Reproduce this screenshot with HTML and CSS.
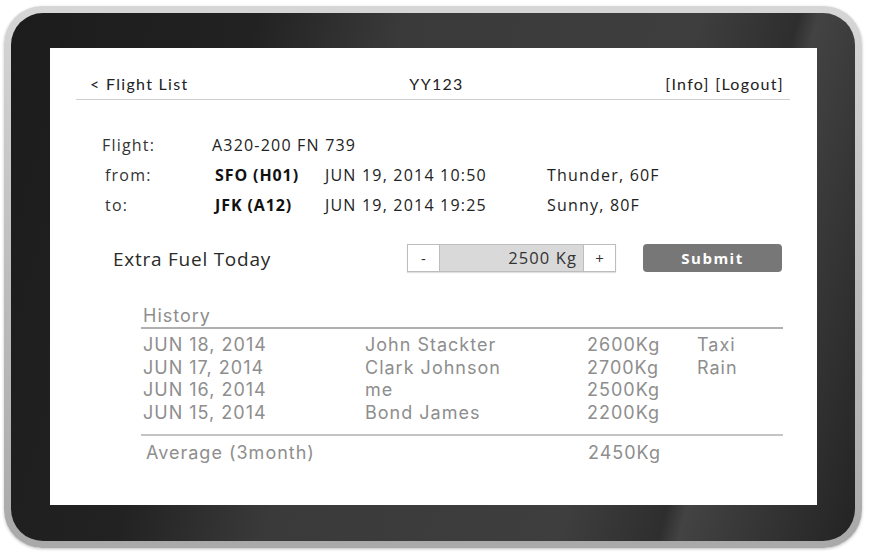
FILE: index.html
```html
<!DOCTYPE html>
<html>
<head>
<meta charset="utf-8">
<link rel="stylesheet" href="styles.css">
</head>
<body>
<div class="tablet">
  <div class="bezel">
    <div class="screen">
      <div class="topbar">
        <span class="back">&lt; Flight List</span>
        <span class="title">YY123</span>
        <span class="links">[Info] [Logout]</span>
      </div>

      <div class="info">
        <span class="label">Flight:</span>
        <span class="span3">A320-200 FN 739</span>
        <span class="label ind">from:</span>
        <span class="code ind">SFO (H01)</span>
        <span class="ind">JUN 19, 2014 10:50</span>
        <span class="ind">Thunder, 60F</span>
        <span class="label ind">to:</span>
        <span class="code ind">JFK (A12)</span>
        <span class="ind">JUN 19, 2014 19:25</span>
        <span class="ind">Sunny, 80F</span>
      </div>

      <div class="fuel">
        <span class="fuel-label">Extra Fuel Today</span>
        <div class="stepper">
          <span class="step-btn">-</span>
          <span class="step-value">2500 Kg</span>
          <span class="step-btn">+</span>
        </div>
        <span class="submit">Submit</span>
      </div>

      <div class="history">
        <div class="history-title">History</div>
        <div class="history-rows">
          <span>JUN 18, 2014</span><span>John Stackter</span><span>2600Kg</span><span>Taxi</span>
          <span>JUN 17, 2014</span><span>Clark Johnson</span><span>2700Kg</span><span>Rain</span>
          <span>JUN 16, 2014</span><span>me</span><span>2500Kg</span><span></span>
          <span>JUN 15, 2014</span><span>Bond James</span><span>2200Kg</span><span></span>
        </div>
        <div class="average">
          <span>Average (3month)</span><span>2450Kg</span>
        </div>
      </div>
    </div>
  </div>
</div>
</body>
</html>
```

FILE: styles.css
```css
* { box-sizing: border-box; }

html, body {
  margin: 0;
  padding: 0;
  background: #ffffff;
}

body {
  width: 874px;
  height: 556px;
  overflow: hidden;
  font-family: "Open Sans", "Noto Sans", sans-serif;
}

.tablet {
  margin: 6px 0 0 4px;
  width: 858px;
  height: 542px;
  border-radius: 38px;
  padding: 7px;
  background: linear-gradient(180deg, #d6d6d6 0%, #bdbdbd 50%, #a9a9a9 100%);
  box-shadow: 0 1px 3px rgba(0,0,0,0.25);
}

.bezel {
  width: 100%;
  height: 100%;
  border-radius: 32px;
  padding: 35px 38px 36px 39px;
  background:
    linear-gradient(105deg, #1c1c1c 0%, #222 25%, #3a3a3a 40%, #3e3e3e 70%, #2e2e2e 80%, #434343 82%, #2c2c2c 95%, #232323 100%);
}

.screen {
  width: 767px;
  height: 457px;
  background: #ffffff;
  color: #222;
}

/* header */
.topbar {
  margin: 0 27px 0 26px;
  padding: 26px 7px 5px 14px;
  height: 52px;
  display: grid;
  grid-template-columns: 1fr auto 1fr;
  align-items: center;
  border-bottom: 1px solid #cfcfcf;
  font-family: "Lato", "Noto Sans", sans-serif;
  font-size: 16px;
  line-height: 20px;
  color: #222;
  letter-spacing: 1.3px;
}
.topbar .back { justify-self: start; }
.topbar .title { justify-self: center; }
.topbar .links { justify-self: end; margin-right: -1px; }

/* flight info */
.info {
  margin-top: 30px;
  padding-left: 52px;
  display: grid;
  grid-template-columns: 110px 110px 222px auto;
  grid-auto-rows: 30px;
  align-items: center;
  font-size: 16px;
  letter-spacing: 1.2px;
  color: #222;
}
.info .ind { padding-left: 3px; }
.info .label { color: #333; }
.info .span3 { grid-column: span 3; }
.info .code { font-weight: 700; color: #111; letter-spacing: 0.9px; }

/* fuel */
.fuel {
  margin-top: 24px;
  padding-left: 63px;
  display: flex;
  align-items: center;
  height: 28px;
}
.fuel-label {
  width: 294px;
  font-size: 19px;
  letter-spacing: 0.75px;
  color: #2a2a2a;
  padding-top: 2px;
}
.stepper {
  display: flex;
  width: 209px;
  height: 28px;
  border: 1px solid #bdbdbd;
  box-shadow: 0 1px 1px rgba(0,0,0,0.12);
}
.step-btn {
  width: 31px;
  display: flex;
  align-items: center;
  justify-content: center;
  font-size: 15px;
  color: #333;
  background: #fff;
}
.step-value {
  flex: 1;
  background: #d9d9d9;
  border-left: 1px solid #bdbdbd;
  border-right: 1px solid #bdbdbd;
  text-align: right;
  padding-right: 6px;
  font-size: 16.5px;
  letter-spacing: 1.1px;
  line-height: 26px;
  color: #333;
}
.submit {
  margin-left: 27px;
  width: 139px;
  height: 28px;
  border-radius: 4px;
  background: #777777;
  color: #ffffff;
  font-weight: 700;
  font-size: 15px;
  letter-spacing: 1.5px;
  display: flex;
  align-items: center;
  justify-content: center;
}

/* history */
.history {
  margin: 33px 0 0 91px;
  width: 642px;
  color: #8e8e8e;
  font-family: "Inter", "Open Sans", sans-serif;
  font-size: 18px;
  letter-spacing: 1px;
}
.history-title {
  padding-left: 2px;
  line-height: 22px;
  border-bottom: 2px solid #b0b0b0;
}
.history-rows {
  padding: 5px 0 10px 2px;
  display: grid;
  grid-template-columns: 222px 222px 110px auto;
  grid-auto-rows: 22.5px;
  line-height: 22.5px;
  border-bottom: 2px solid #c4c4c4;
}
.average {
  padding: 6px 0 0 5px;
  display: grid;
  grid-template-columns: 442px auto;
  line-height: 22px;
}
```
